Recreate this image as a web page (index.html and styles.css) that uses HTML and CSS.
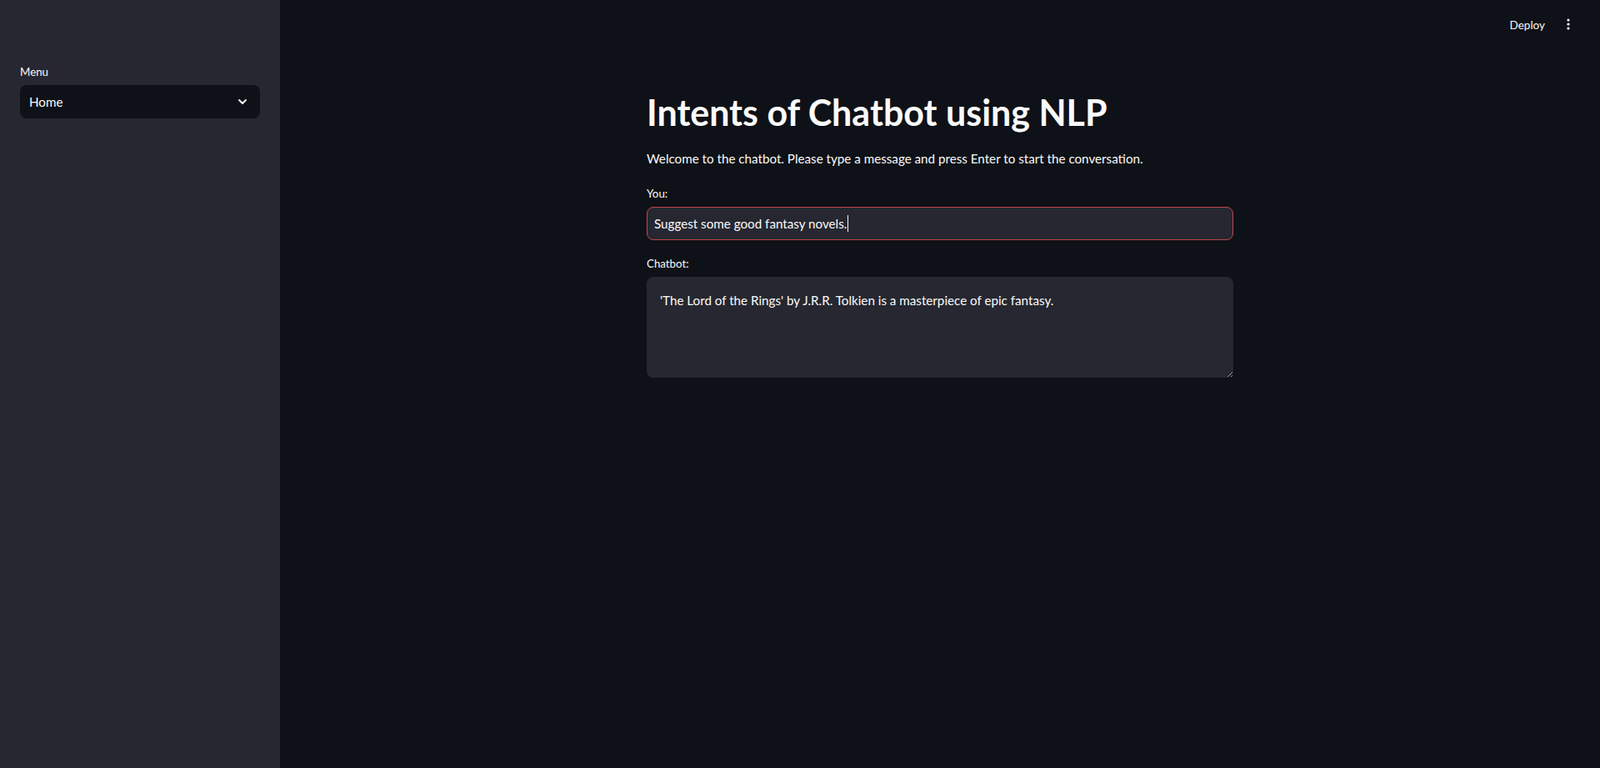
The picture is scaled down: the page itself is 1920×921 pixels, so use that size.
FILE: index.html
```html
<!DOCTYPE html>
<html lang="en">
<head>
<meta charset="utf-8">
<title>Intents of Chatbot using NLP</title>
<link rel="stylesheet" href="styles.css">
</head>
<body>
<div class="app">
  <aside class="sidebar">
    <div class="field-label">Menu</div>
    <div class="select">
      <span class="select-value">Home</span>
      <svg class="chevron" width="16" height="16" viewBox="0 0 24 24" aria-hidden="true"><path d="M6 9l6 6 6-6" fill="none" stroke="#fafafa" stroke-width="3" stroke-linecap="round" stroke-linejoin="round"/></svg>
    </div>
  </aside>
  <main class="main">
    <header class="topbar">
      <button class="deploy">Deploy</button>
      <button class="kebab" aria-label="Main menu">
        <svg width="4" height="14" viewBox="0 0 4 14" aria-hidden="true"><circle cx="2" cy="2" r="1.6" fill="#fafafa"/><circle cx="2" cy="7" r="1.6" fill="#fafafa"/><circle cx="2" cy="12" r="1.6" fill="#fafafa"/></svg>
      </button>
    </header>
    <section class="content">
      <h1 class="title">Intents of Chatbot using NLP</h1>
      <p class="intro">Welcome to the chatbot. Please type a message and press Enter to start the conversation.</p>
      <div class="field-label">You:</div>
      <div class="text-input"><span class="input-text">Suggest some good fantasy novels.</span><span class="caret"></span></div>
      <div class="field-label chatbot-label">Chatbot:</div>
      <textarea class="text-area" readonly>'The Lord of the Rings' by J.R.R. Tolkien is a masterpiece of epic fantasy.</textarea>
    </section>
  </main>
</div>
</body>
</html>
```
FILE: styles.css
```css
html, body {
  margin: 0;
  padding: 0;
  height: 100%;
}
body {
  background: #0e1117;
  color: #fafafa;
  font-family: "Lato", "Liberation Sans", sans-serif;
  color-scheme: dark;
}
.app {
  display: flex;
  height: 100vh;
}
.sidebar {
  width: 336px;
  flex: 0 0 336px;
  box-sizing: border-box;
  background: #262730;
  padding: 76px 24px 24px;
}
.field-label {
  font-size: 13.3px;
  line-height: 20px;
  margin-bottom: 6px;
  color: #fafafa;
}
.select {
  height: 40px;
  box-sizing: border-box;
  background: #0e1117;
  border-radius: 8px;
  display: flex;
  align-items: center;
  justify-content: space-between;
  padding: 0 13px 0 11px;
}
.select-value {
  font-size: 15.2px;
}
.main {
  flex: 1;
  display: flex;
  flex-direction: column;
  min-width: 0;
}
.topbar {
  height: 58px;
  display: flex;
  align-items: center;
  justify-content: flex-end;
  padding-right: 22px;
  gap: 12px;
}
.deploy {
  background: none;
  border: none;
  color: #fafafa;
  font-family: inherit;
  font-size: 13.5px;
  padding: 0;
  line-height: 20px;
  margin-top: 1px;
}
.kebab {
  background: none;
  border: none;
  width: 32px;
  height: 32px;
  display: flex;
  align-items: center;
  justify-content: center;
  padding: 0;
}
.content {
  width: 704px;
  margin: 0 auto;
  padding-top: 50px;
}
.title {
  margin: 0;
  font-size: 43px;
  line-height: 53px;
  font-weight: 700;
}
.intro {
  margin: 17px 0 20px;
  font-size: 15.2px;
  line-height: 24px;
}
.text-input {
  height: 40px;
  box-sizing: border-box;
  background: #262730;
  border: 1px solid #c0474d;
  border-radius: 8px;
  display: flex;
  align-items: center;
  padding: 0 8px;
  font-size: 15.2px;
}
.caret {
  display: inline-block;
  width: 1px;
  height: 20px;
  background: #fafafa;
  margin-left: 1px;
}
.chatbot-label {
  margin-top: 18px;
}
.text-area {
  display: block;
  width: 100%;
  height: 121px;
  box-sizing: border-box;
  background: #262730;
  color: #fafafa;
  border: none;
  border-radius: 8px;
  padding: 16px 16px;
  font-family: inherit;
  font-size: 15.2px;
  line-height: 24px;
  resize: vertical;
  outline: none;
}
```
